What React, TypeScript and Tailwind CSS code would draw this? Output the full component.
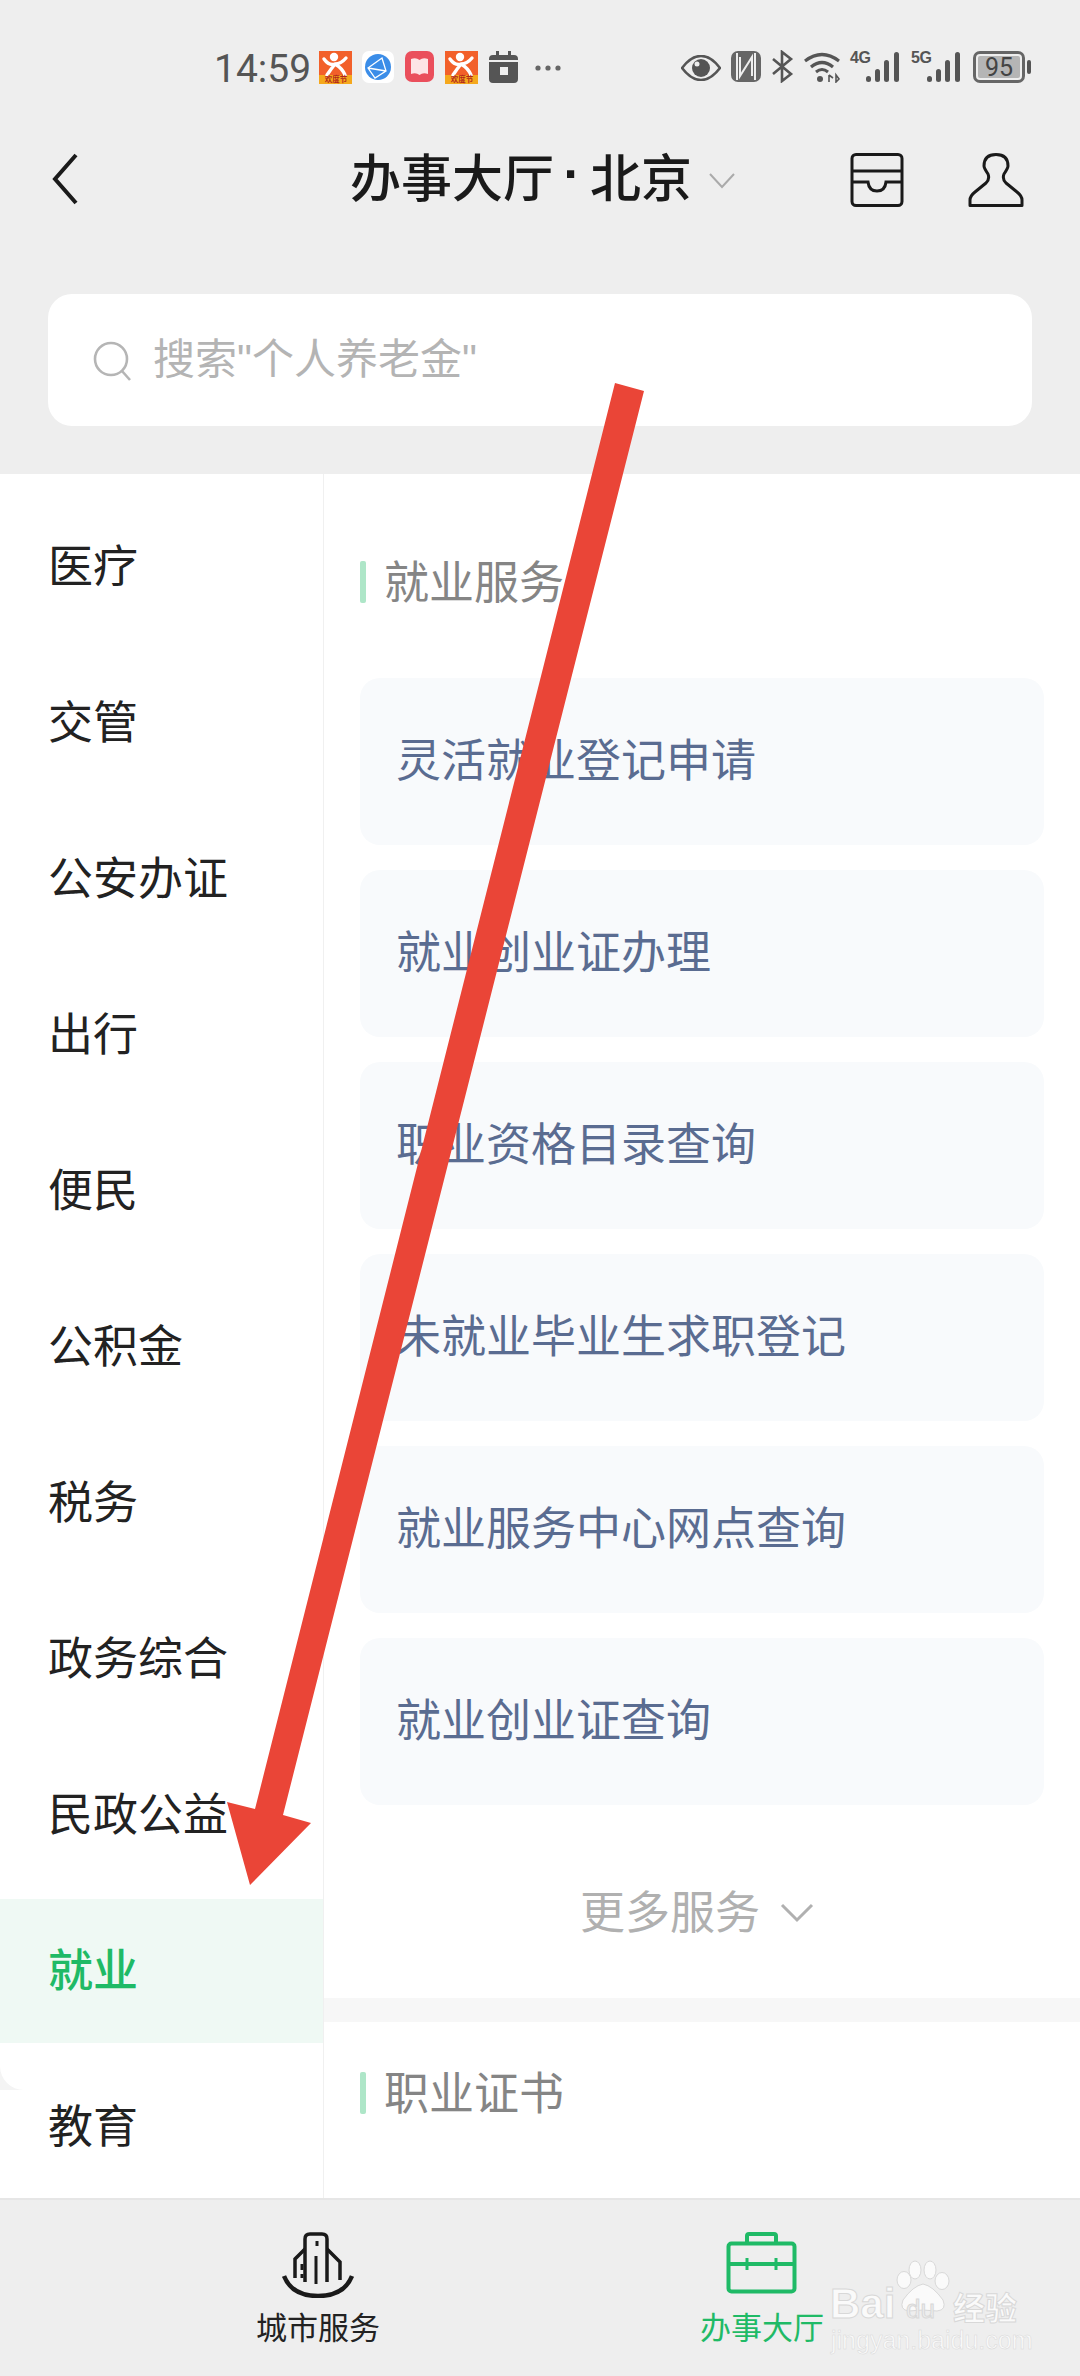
const CJK = "font-['Noto_Sans_CJK_SC','Noto_Sans',sans-serif]";

function OrangeApp() {
  return (
    <svg width="33" height="33" viewBox="0 0 33 33" className="shrink-0">
      <rect width="33" height="24" fill="#f2602a" />
      <rect y="24" width="33" height="9" fill="#f5a81c" />
      <circle cx="15" cy="6" r="4.2" fill="#fff" />
      <path d="M5 8 Q10 15 16 13 Q22 13 27 7 M16 13 Q12 18 8 24 M16 13 Q23 17 26 24" stroke="#fff" strokeWidth="3.4" fill="none" strokeLinecap="round" />
      <text x="17" y="31" textAnchor="middle" fontSize="7.5" fontWeight="700" fill="#b3261e" fontFamily="Noto Sans CJK SC">欢度节</text>
    </svg>
  );
}

function Signal({ label }: { label: string }) {
  return (
    <div className="relative w-[50px] h-[32px] shrink-0">
      <span className="absolute left-0 top-[-2px] text-[16px] leading-[18px] font-bold text-[#555] font-['Liberation_Sans',sans-serif] tracking-[-0.5px]">{label}</span>
      <svg width="34" height="32" viewBox="0 0 34 32" className="absolute right-0 top-0">
        <rect x="0" y="25" width="5" height="6" rx="2.5" fill="#555" />
        <rect x="9" y="18" width="5" height="13" rx="2.5" fill="#555" />
        <rect x="18" y="9" width="5" height="22" rx="2.5" fill="#555" />
        <rect x="28" y="1" width="5" height="30" rx="2.5" fill="#555" />
      </svg>
    </div>
  );
}

function StatusBar() {
  return (
    <div className="h-[100px] pt-[51px] pl-[214px] flex items-start">
      <span className="text-[39px] leading-[36px] text-[#555] font-['Roboto',sans-serif] w-[105px] shrink-0">14:59</span>
      <OrangeApp />
      <svg width="32" height="32" viewBox="0 0 32 32" className="ml-[10px] shrink-0">
        <rect width="32" height="32" rx="7" fill="#fff" />
        <circle cx="16" cy="16" r="13" fill="#3b8de8" />
        <path d="M6 17 L20 7 L24 20 L13 27 Z M6 17 L24 20" stroke="#fff" strokeWidth="1.3" fill="none" />
      </svg>
      <svg width="29" height="31" viewBox="0 0 29 31" className="ml-[11px] shrink-0">
        <rect width="29" height="31" rx="7" fill="#ea4f5c" />
        <path d="M6 8 Q11 6 14.5 9 Q18 6 23 8 V23 Q18 21 14.5 24 Q11 21 6 23 Z" fill="#fde4e6" />
      </svg>
      <div className="ml-[11px] shrink-0"><OrangeApp /></div>
      <svg width="29" height="32" viewBox="0 0 29 32" className="ml-[11px] shrink-0">
        <path d="M7 0 h3 v4 h9 v-4 h3 v4 h3 a4 4 0 0 1 4 4 v20 a4 4 0 0 1 -4 4 h-21 a4 4 0 0 1 -4 -4 v-20 a4 4 0 0 1 4 -4 h3 Z" fill="#555" />
        <rect x="0" y="9" width="29" height="2" fill="#eeeeee" />
        <rect x="11" y="16" width="8" height="8" fill="#eeeeee" />
      </svg>
      <svg width="26" height="6" viewBox="0 0 26 6" className="ml-[17px] mt-[14px] shrink-0">
        <circle cx="3" cy="3" r="2.6" fill="#666" /><circle cx="13" cy="3" r="2.6" fill="#666" /><circle cx="23" cy="3" r="2.6" fill="#666" />
      </svg>
      <svg width="40" height="26" viewBox="0 0 40 26" className="ml-[120px] mt-[4px] shrink-0">
        <path d="M1 13 Q10 1 20 1 Q30 1 39 13 Q30 25 20 25 Q10 25 1 13 Z" fill="none" stroke="#555" strokeWidth="2.6" />
        <circle cx="20" cy="13" r="9" fill="#555" />
        <circle cx="16" cy="9" r="2.5" fill="#eeeeee" />
      </svg>
      <svg width="30" height="31" viewBox="0 0 30 31" className="ml-[10px] shrink-0">
        <rect width="30" height="31" rx="7" fill="#666" />
        <path d="M6 2 V29 M9 6 V25 L21 6 V25 M24 2 V29" stroke="#eeeeee" strokeWidth="2" fill="none" />
      </svg>
      <svg width="24" height="33" viewBox="0 0 24 33" className="ml-[10px] mt-[-1px] shrink-0">
        <path d="M2 9 L20 24 L11 31 V2 L20 9 L2 24" stroke="#555" strokeWidth="2.6" fill="none" />
      </svg>
      <svg width="38" height="32" viewBox="0 0 38 32" className="ml-[8px] shrink-0">
        <path d="M2 10 Q19 -3 36 10" stroke="#555" strokeWidth="3.2" fill="none" />
        <path d="M8 16 Q19 7 30 16" stroke="#555" strokeWidth="3.2" fill="none" />
        <path d="M13 21 Q19 16 25 21" stroke="#555" strokeWidth="3" fill="none" />
        <circle cx="17" cy="28" r="3" fill="#555" />
        <path d="M26 24 v7 M30 27 l-4 -3 M33 24 v7 l3 -3 Z" stroke="#555" strokeWidth="1.6" fill="none" />
      </svg>
      <div className="ml-[9px]"><Signal label="4G" /></div>
      <div className="ml-[11px]"><Signal label="5G" /></div>
      <div className="ml-[12px] flex items-center gap-[2px] shrink-0">
        <div className="w-[52px] h-[32px] rounded-[7px] border-[3px] border-[#666] p-[2px] flex">
          <div className="flex-1 bg-[#b5b5b5] rounded-[2px] flex items-center justify-center text-[25px] leading-none text-[#444] font-['Roboto',sans-serif]">95</div>
        </div>
        <div className="w-[4px] h-[14px] rounded-[2px] bg-[#555]" />
      </div>
    </div>
  );
}

function TitleBar() {
  return (
    <div className="h-[156px] flex items-start pt-[53px] pl-[52px]">
      <svg width="26" height="52" viewBox="0 0 26 52" className="shrink-0">
        <path d="M24 2 L3 26 L24 50" stroke="#1a1a1a" strokeWidth="4" fill="none" />
      </svg>
      <div className="ml-[272px] mt-[-4px] flex items-center h-[52px] font-medium text-[51px] leading-[52px] text-[#1a1a1a] whitespace-nowrap">
        办事大厅<span className="w-[36px] text-center font-bold font-['Liberation_Sans',sans-serif]">·</span>北京
      </div>
      <svg width="26" height="16" viewBox="0 0 26 16" className="ml-[17px] mt-[20px] shrink-0">
        <path d="M1 1 L13 14 L25 1" stroke="#aaa" strokeWidth="2" fill="none" />
      </svg>
      <svg width="54" height="54" viewBox="0 0 54 54" className="ml-[115px] shrink-0">
        <rect x="2" y="1.5" width="50" height="51" rx="4" stroke="#1a1a1a" strokeWidth="3" fill="none" />
        <path d="M2 18 H52 M2 29 H18 Q19 38 27 38 Q35 38 36 29 H52" stroke="#1a1a1a" strokeWidth="3" fill="none" />
      </svg>
      <svg width="58" height="54" viewBox="0 0 58 54" className="ml-[63px] shrink-0">
        <path d="M3 52.5 H55 V47 Q55 43 50 39 L39 30 Q35 26 37 21 Q41 15 41 13 Q41 1.5 29 1.5 Q17 1.5 17 13 Q17 15 21 21 Q23 26 19 30 L8 39 Q3 43 3 47 Z" stroke="#1a1a1a" strokeWidth="3" fill="none" strokeLinejoin="round" />
      </svg>
    </div>
  );
}

function SearchBox() {
  return (
    <div className="px-[48px] pt-[38px] pb-[48px]">
      <div className="h-[132px] rounded-[24px] bg-white flex items-center pl-[45px]">
        <svg width="40" height="40" viewBox="0 0 40 40" className="shrink-0 mt-[2px]">
          <circle cx="18" cy="18" r="16" stroke="#b5b5b5" strokeWidth="2.6" fill="none" />
          <path d="M29 30 L37 39" stroke="#b5b5b5" strokeWidth="2.6" fill="none" />
        </svg>
        <span className="ml-[20px] pb-[4px] text-[42px] leading-none text-[#b4b4b4] whitespace-nowrap">
          搜索<span className="font-['Liberation_Sans',sans-serif]">"</span>个人养老金<span className="font-['Liberation_Sans',sans-serif]">"</span>
        </span>
      </div>
    </div>
  );
}

const menu = ["医疗", "交管", "公安办证", "出行", "便民", "公积金", "税务", "政务综合", "民政公益", "就业", "教育"];

function Sidebar() {
  return (
    <div className="relative w-[324px] shrink-0 border-r border-[#f0f0f0] pt-[21px] flex flex-col gap-[12px]">
      {menu.map((m) => {
        const active = m === "就业";
        return (
          <div key={m} className={`h-[144px] shrink-0 flex items-center pl-[48px] pb-[7px] text-[45px] leading-none whitespace-nowrap ${active ? "bg-[#eff9f4] text-[#1fba66] font-medium" : "text-[#222]"}`}>
            {m}
          </div>
        );
      })}
      <div className="absolute left-0 top-[1592px] w-[24px] h-[24px] bg-[#f4f4f4]">
        <div className="w-full h-full bg-white rounded-bl-[24px]" />
      </div>
    </div>
  );
}

function SectionTitle({ text }: { text: string }) {
  return (
    <div className="flex items-center h-[44px]">
      <div className="w-[6px] h-[42px] rounded-[2px] bg-[#aee6c8]" />
      <span className="ml-[18px] pb-[6px] text-[45px] leading-none text-[#858585]">{text}</span>
    </div>
  );
}

const services = ["灵活就业登记申请", "就业创业证办理", "职业资格目录查询", "未就业毕业生求职登记", "就业服务中心网点查询", "就业创业证查询"];

function Content() {
  return (
    <div className="flex-1 min-w-0">
      <div className="pt-[86px] pl-[36px] pr-[36px] h-[1524px]">
        <SectionTitle text="就业服务" />
        <div className="mt-[74px] flex flex-col gap-[25px]">
          {services.map((s) => (
            <div key={s} className="h-[167px] rounded-[20px] bg-[#f8fafc] flex items-center pl-[36px] pb-[8px] text-[45px] leading-none text-[#5a6c91] whitespace-nowrap">{s}</div>
          ))}
        </div>
        <div className="mt-[85px] flex items-center justify-center pr-[10px] h-[44px] text-[#b0b0b0] text-[45px] leading-none">
          <span className="pb-[6px]">更多服务</span>
          <svg width="34" height="20" viewBox="0 0 34 20" className="ml-[20px] mt-[2px]">
            <path d="M2 2 L17 17 L32 2" stroke="#b0b0b0" strokeWidth="3" fill="none" />
          </svg>
        </div>
      </div>
      <div className="h-[24px] bg-[#f7f7f7]" />
      <div className="pt-[49px] pl-[36px]">
        <SectionTitle text="职业证书" />
      </div>
    </div>
  );
}

function BottomNav() {
  return (
    <div className="h-[178px] bg-[#eeeeee] border-t-2 border-[#e6e6e6] flex shrink-0 pt-[32px]">
      <div className="w-[636px] flex flex-col items-center">
        <svg width="72" height="66" viewBox="0 0 72 66" className="shrink-0">
          <path d="M23 50 V7 Q23 2 28 2 H40 Q45 2 45 7 V50" stroke="#1a1a1a" strokeWidth="3.5" fill="none" />
          <path d="M23 17 L13 27 V46 M45 17 L58 30 V48" stroke="#1a1a1a" strokeWidth="3.5" fill="none" />
          <path d="M35 9 V14 M20 32 V38 M20 42 V46" stroke="#1a1a1a" strokeWidth="3" fill="none" />
          <path d="M34 24 V52" stroke="#1a1a1a" strokeWidth="3" />
          <path d="M2 44 Q10 64 36 64 Q62 64 70 44" stroke="#1a1a1a" strokeWidth="4.5" fill="none" />
        </svg>
        <span className="mt-[10px] text-[31px] leading-[36px] text-[#222]">城市服务</span>
      </div>
      <div className="w-[252px] flex flex-col items-center">
        <svg width="72" height="62" viewBox="0 0 72 62" className="shrink-0">
          <rect x="2.5" y="11.5" width="66" height="48" rx="3" stroke="#1fba66" strokeWidth="4" fill="none" />
          <path d="M21 11 V4 Q21 2 23 2 H48 Q50 2 50 4 V11" stroke="#1fba66" strokeWidth="4" fill="none" />
          <path d="M3 32 H68" stroke="#1fba66" strokeWidth="4" />
          <path d="M21 26 V38 M50 26 V38" stroke="#1fba66" strokeWidth="3" />
        </svg>
        <span className="mt-[14px] text-[31px] leading-[36px] text-[#1fba66] whitespace-nowrap">办事大厅</span>
      </div>
    </div>
  );
}

const wmStroke = "[-webkit-text-stroke:1px_#d8d8d8]";

function Watermark() {
  return (
    <div className="absolute left-[828px] top-[2258px] w-[200px] h-[100px] pointer-events-none">
      <svg width="60" height="54" viewBox="0 0 60 54" className="absolute left-[65px] top-[2px]">
        <g fill="#fafafa" stroke="#d8d8d8" strokeWidth="1">
          <ellipse cx="11" cy="20" rx="7" ry="8.5" />
          <ellipse cx="22" cy="10" rx="6" ry="9" />
          <ellipse cx="37" cy="10" rx="6" ry="9" />
          <ellipse cx="49" cy="21" rx="7" ry="8.5" />
          <path d="M30 24 Q40 26 50 40 Q54 50 44 51 Q30 49 16 51 Q6 50 10 40 Q20 26 30 24 Z" />
        </g>
      </svg>
      <span className={`absolute left-[2px] top-[24px] text-[42px] leading-[44px] font-bold text-[#fafafa] font-['Liberation_Sans',sans-serif] ${wmStroke}`}>Bai</span>
      <span className={`absolute left-[78px] top-[36px] text-[26px] leading-[30px] text-[#eeeeee] font-['Liberation_Sans',sans-serif] ${wmStroke}`}>du</span>
      <span className={`absolute left-[125px] top-[31px] text-[32px] leading-[34px] font-bold text-[#fafafa] ${wmStroke}`}>经验</span>
      <span className={`absolute left-[3px] top-[69px] text-[25px] leading-[26px] text-[#fafafa] font-['Liberation_Sans',sans-serif] whitespace-nowrap [-webkit-text-stroke:0.5px_#d8d8d8]`}>jingyan.baidu.com</span>
    </div>
  );
}

function Arrow() {
  return (
    <svg width="1080" height="2376" viewBox="0 0 1080 2376" className="absolute left-0 top-0 pointer-events-none">
      <polygon points="615,383 644,391 283,1815 311,1823 250,1885 227,1802 255,1809" fill="#ea4537" />
    </svg>
  );
}

export default function App() {
  return (
    <div className={`relative w-[1080px] h-[2376px] overflow-hidden bg-[#eeeeee] flex flex-col ${CJK}`}>
      <StatusBar />
      <TitleBar />
      <SearchBox />
      <div className="flex-1 min-h-0 bg-white flex overflow-hidden">
        <Sidebar />
        <Content />
      </div>
      <BottomNav />
      <Arrow />
      <Watermark />
    </div>
  );
}
